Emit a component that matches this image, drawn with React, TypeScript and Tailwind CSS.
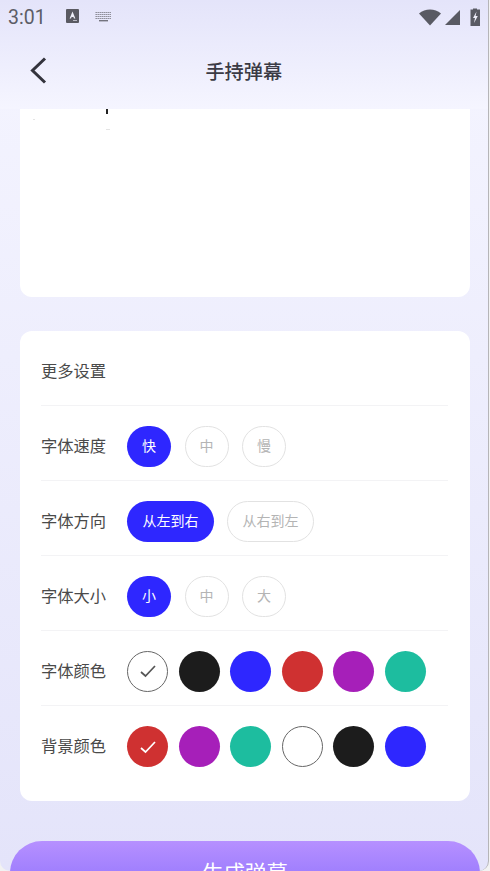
const FONT = 'font-["Roboto","Noto_Sans_CJK_SC",sans-serif]';

const FONT_COLORS = [
  { bg: 'bg-white border-[1.75px] border-[#666666]', check: '#555555' },
  { bg: 'bg-[#1c1c1c]' },
  { bg: 'bg-[#2e27ff]' },
  { bg: 'bg-[#cf3131]' },
  { bg: 'bg-[#a61fb9]' },
  { bg: 'bg-[#1dbd9f]' },
];

const BG_COLORS = [
  { bg: 'bg-[#cf3131]', check: '#ffffff' },
  { bg: 'bg-[#a61fb9]' },
  { bg: 'bg-[#1dbd9f]' },
  { bg: 'bg-white border-[1.75px] border-[#666666]' },
  { bg: 'bg-[#1c1c1c]' },
  { bg: 'bg-[#2e27ff]' },
];

function Choice({ label, active, wide }: { label: string; active?: boolean; wide?: boolean }) {
  return (
    <div
      className={`h-[41px] ${wide ? 'w-[87px]' : 'w-[44px]'} pt-[1px] flex items-center justify-center rounded-full text-[14px] ${
        active ? 'bg-[#2e27ff] text-white' : 'border-[1.5px] border-[#e2e2e2] text-[#b4b4b4]'
      }`}
    >
      {label}
    </div>
  );
}

function Swatches({ items }: { items: { bg: string; check?: string }[] }) {
  return (
    <div className="flex items-center gap-[10.6px]">
      {items.map((item, i) => (
        <div key={i} className={`w-[41px] h-[41px] rounded-full flex items-center justify-center ${item.bg}`}>
          {item.check && (
            <svg width="16" height="14" viewBox="0 0 16 14" fill="none">
              <path d="M1 8 L5.5 12 L15 2" stroke={item.check} strokeWidth="1.7" />
            </svg>
          )}
        </div>
      ))}
    </div>
  );
}

function Row({ label, children, last }: { label: string; children: React.ReactNode; last?: boolean }) {
  return (
    <div className={`h-[75px] pt-[6px] flex items-center ${last ? '' : 'border-b border-[#f3f3f5]'}`}>
      <span className="w-[86px] mt-[2px] text-[16.3px] leading-none whitespace-nowrap text-[#4a4a4a]">{label}</span>
      {children}
    </div>
  );
}

export default function App() {
  return (
    <div className={`w-[490px] h-[871px] overflow-hidden bg-[#f2f2f2] ${FONT}`}>
      <div className="w-[488.5px] h-[871px] overflow-hidden rounded-b-[10px] border-r border-[#b5b5b8] flex flex-col bg-gradient-to-b from-[#f5f5ff] to-[#e4e4fa]">
        {/* Header */}
        <header className="h-[109px] shrink-0 flex flex-col bg-gradient-to-b from-[#e4e4fa] to-[#f5f5ff]">
          <div className="relative h-[33px] shrink-0 flex items-center pl-[8px]">
            <span className="text-[19.5px] leading-none text-[#5c5d66] font-['Roboto',sans-serif] mt-[2px]">3:01</span>
            <svg width="14" height="15" viewBox="0 0 14 15" className="ml-[20px] mt-[-1px]">
              <rect width="13" height="14" rx="1" fill="#5a5a62" />
              <path d="M6.5 2.5 L3.6 9.5 H5 L5.6 8 H7.4 L8 9.5 H9.4 Z" fill="#eeeef8" />
              <rect x="7" y="11" width="4" height="1" fill="#b8b8c2" />
            </svg>
            <svg width="17" height="10" viewBox="0 0 17 10" className="ml-[15px]">
              <path d="M0.5 0.5 H16.5 M0.5 2.5 H16.5 M0.5 4.5 H16.5 M0.5 6.5 H16.5" stroke="#85858f" strokeWidth="1" strokeDasharray="1.4 0.6" />
              <path d="M4 8.7 H13" stroke="#74747e" strokeWidth="1.4" />
            </svg>
            <div className="ml-auto mr-[7px] flex items-start gap-[4px]">
              <svg width="22" height="17" viewBox="0 0 22 17" className="mt-[1px]">
                <path d="M0 4.5 C6 -1 16 -1 22 4.5 L11 16.5 Z" fill="#595a63" />
              </svg>
              <svg width="16" height="16" viewBox="0 0 16 16" className="mt-[1px]">
                <path d="M0 16 L15 1 V16 Z" fill="#595a63" />
              </svg>
              <svg width="11" height="18" viewBox="0 0 11 18" className="ml-[5px]">
                <path d="M3 1.5 V0.5 H7 V1.5 H10 V18 H0.5 V1.5 Z" fill="#595a63" />
                <path d="M6.5 3.5 L3 10 H5 L4 15 L7.8 8 H5.6 Z" fill="#eeeef9" />
              </svg>
            </div>
          </div>
          <div className="relative flex-1 flex items-center justify-center">
            <svg width="17" height="27" viewBox="0 0 17 27" fill="none" className="absolute left-[30px] top-[24px]">
              <path d="M15 1.5 L2.5 13.5 L15 25.5" stroke="#33333d" strokeWidth="3" />
            </svg>
            <span className="mt-[3px] text-[19.2px] leading-none font-medium text-[#3a3a44]">手持弹幕</span>
          </div>
        </header>

        <main className="flex-1 flex flex-col">
          {/* Preview */}
          <section className="relative mx-[20px] w-[450px] h-[188px] shrink-0 bg-white rounded-b-xl">
            <span className="absolute left-[86px] top-0 w-[1.5px] h-[5px] bg-[#222222]" />
            <span className="absolute left-[86px] top-[20px] w-[4px] h-px bg-[#e4e4e4]" />
            <span className="absolute left-[13px] top-[10px] w-[2px] h-px bg-[#e4e4e4]" />
          </section>

          {/* Settings */}
          <section className="mt-[34px] mx-[20px] w-[450px] h-[470px] shrink-0 bg-white rounded-xl pl-[21px] pr-[22px]">
            <div className="h-[75px] flex items-center border-b border-[#f3f3f5]">
              <span className="text-[16.3px] leading-none text-[#4a4a4a] mt-[9px]">更多设置</span>
            </div>
            <Row label="字体速度">
              <div className="flex gap-[13.5px]">
                <Choice label="快" active />
                <Choice label="中" />
                <Choice label="慢" />
              </div>
            </Row>
            <Row label="字体方向">
              <div className="flex gap-[13px]">
                <Choice label="从左到右" active wide />
                <Choice label="从右到左" wide />
              </div>
            </Row>
            <Row label="字体大小">
              <div className="flex gap-[13.5px]">
                <Choice label="小" active />
                <Choice label="中" />
                <Choice label="大" />
              </div>
            </Row>
            <Row label="字体颜色">
              <Swatches items={FONT_COLORS} />
            </Row>
            <Row label="背景颜色" last>
              <Swatches items={BG_COLORS} />
            </Row>
          </section>

          <button className="mt-[40px] ml-[10px] w-[470px] h-[64px] pt-[1px] shrink-0 rounded-[36px] bg-gradient-to-b from-[#b690ff] to-[#8a6cfb] text-white text-[21.5px] leading-none">
            生成弹幕
          </button>
        </main>
      </div>
    </div>
  );
}
